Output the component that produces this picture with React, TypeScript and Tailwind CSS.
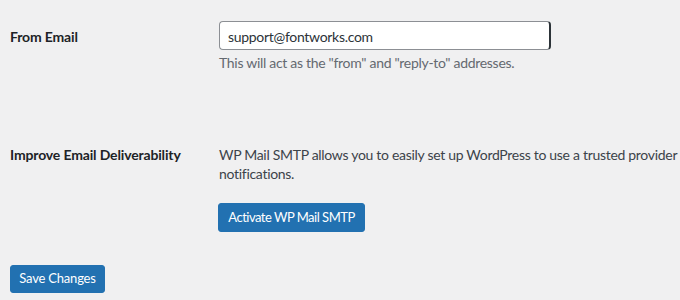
export default function App() {
  return (
    <div
      className="min-h-screen w-full overflow-hidden bg-[#f0f0f1] pl-[10px] pt-[21px] text-[14px] text-[#3c434a]"
      style={{ fontFamily: 'Lato, "Noto Sans", sans-serif' }}
    >
      {/* From Email row */}
      <div className="grid grid-cols-[209px_1fr]">
        <div className="pt-[6px] font-bold leading-[20px] tracking-[-0.15px] text-[#1d2327]">From Email</div>
        <div>
          <input
            type="text"
            defaultValue="support@fontworks.com"
            className="h-[29px] w-[332px] rounded-[4px] border border-[#8c8f94] border-r-2 border-r-[#2c3338] bg-white px-[8px] pt-[2px] text-[14px] tracking-[-0.3px] text-[#2c3338] outline-none"
          />
          <p className="mt-[3px] leading-[20px] tracking-[-0.3px] text-[#646970]">
            This will act as the "from" and "reply-to" addresses.
          </p>
        </div>
      </div>

      {/* Deliverability row */}
      <div className="mt-[72px] grid grid-cols-[209px_1fr]">
        <div className="font-bold leading-[19px] tracking-[-0.15px] text-[#1d2327]">Improve Email Deliverability</div>
        <div>
          <p className="whitespace-nowrap leading-[19px] tracking-[-0.3px]">
            WP Mail SMTP allows you to easily set up WordPress to use a trusted provider to reliably send emails, including form
            <br />
            notifications.
          </p>
          <button className="-ml-px mt-[20px] flex h-[29px] w-[147px] items-center justify-center rounded-[3px] border border-[#2271b1] bg-[#2271b1] text-[13px] tracking-[-0.5px] text-white">
            Activate WP Mail SMTP
          </button>
        </div>
      </div>

      <button className="mt-[33px] flex h-[28px] w-[95px] items-center justify-center rounded-[3px] border border-[#2271b1] bg-[#2271b1] text-[13px] tracking-[-0.2px] text-white">
        Save Changes
      </button>
    </div>
  );
}
